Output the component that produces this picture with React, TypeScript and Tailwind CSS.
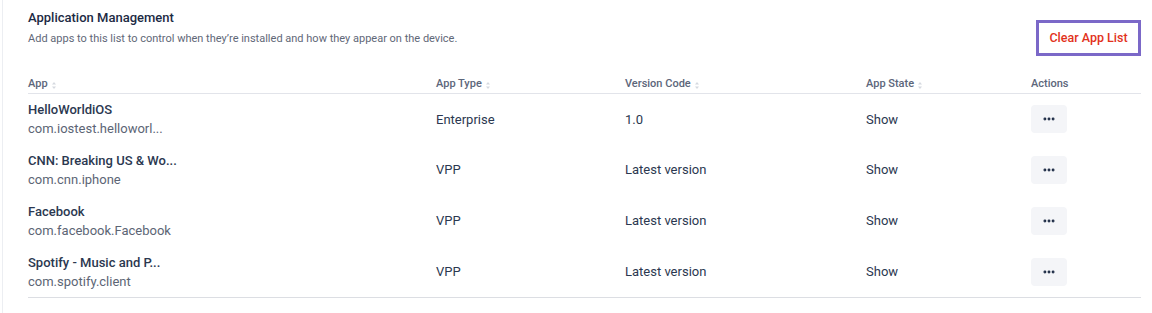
import { MoreHorizontal } from "lucide-react";

const apps = [
  { name: "HelloWorldiOS", bundle: "com.iostest.helloworl...", type: "Enterprise", version: "1.0", state: "Show" },
  { name: "CNN: Breaking US & Wo...", bundle: "com.cnn.iphone", type: "VPP", version: "Latest version", state: "Show" },
  { name: "Facebook", bundle: "com.facebook.Facebook", type: "VPP", version: "Latest version", state: "Show" },
  { name: "Spotify - Music and P...", bundle: "com.spotify.client", type: "VPP", version: "Latest version", state: "Show" },
];

function SortIcon() {
  return (
    <svg width="6" height="9" viewBox="0 0 6 9" className="ml-[3px] mt-[2px]">
      <path d="M3 1 L5 3.5 H1 Z" fill="#d6d9e0" />
      <path d="M3 8 L5 5.5 H1 Z" fill="#d6d9e0" />
    </svg>
  );
}

function HeaderCell({ label, sortable = true }: { label: string; sortable?: boolean }) {
  return (
    <div className="flex items-center text-[11px] font-medium text-[#5c667a]">
      {label}
      {sortable && <SortIcon />}
    </div>
  );
}

export default function App() {
  return (
    <div
      className="w-[1150px] h-[313px] bg-white border-l border-[#eceef2] ml-[2px]"
      style={{ fontFamily: "Roboto, 'Noto Sans', sans-serif" }}
    >
      <div className="pl-[25px] pr-[11px] pt-[9px]">
        <div className="flex items-start justify-between">
          <div>
            <h2 className="text-[13px] font-medium text-[#1c2a44] leading-[18px]">
              Application Management
            </h2>
            <p className="mt-[4px] text-[11px] text-[#5f6878] leading-[16px]">
              Add apps to this list to control when they’re installed and how they appear on the device.
            </p>
          </div>
          <button className="mt-[11px] w-[105px] h-[36px] border-[3px] border-[#7b68c8] bg-white text-[12.5px] font-medium text-[#e2321c] flex items-center justify-center">
            Clear App List
          </button>
        </div>

        <div className="mt-[19px] grid grid-cols-[408px_189px_241px_165px_1fr] items-center h-[19px] border-b border-[#e2e4ea]">
          <HeaderCell label="App" />
          <HeaderCell label="App Type" />
          <HeaderCell label="Version Code" />
          <HeaderCell label="App State" />
          <HeaderCell label="Actions" sortable={false} />
        </div>

        <div className="border-b border-[#dcdee3]">
          {apps.map((app) => (
            <div
              key={app.name}
              className="grid grid-cols-[408px_189px_241px_165px_1fr] items-center h-[50.75px] text-[13px] text-[#2b3850]"
            >
              <div className="leading-[19px]">
                <div className="font-medium text-[#2b3850]">{app.name}</div>
                <div className="text-[#5c6575]">{app.bundle}</div>
              </div>
              <div>{app.type}</div>
              <div>{app.version}</div>
              <div>{app.state}</div>
              <div>
                <button className="w-[36px] h-[28px] rounded-[4px] bg-[#f4f5f8] flex items-center justify-center text-[#1c2a44]">
                  <MoreHorizontal size={14} strokeWidth={3} />
                </button>
              </div>
            </div>
          ))}
        </div>
      </div>
    </div>
  );
}
